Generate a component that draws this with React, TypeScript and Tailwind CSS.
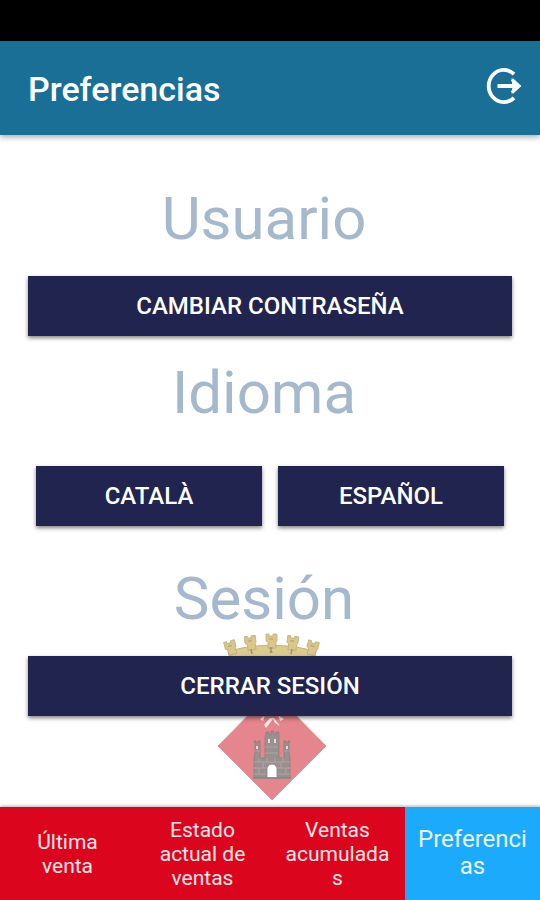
import type { ReactNode } from "react";

function LogoutIcon() {
  return (
    <svg viewBox="0 0 38 38" className="size-[38px]" fill="none" stroke="#fff" strokeWidth="3.8" aria-hidden="true">
      <path d="M30 7.200A15 16.200 0 1 0 30 30.800" />
      <path d="M13.500 19H33" strokeWidth="4" />
      <path d="M27.500 11L37 19L27.500 27L28.500 19Z" fill="#fff" stroke="none" />
      <path d="M28 12.500L35 19L28 25.500" strokeWidth="3.2" />
    </svg>
  );
}

const crenels = [
  { x: 7, y: 8, r: -15 },
  { x: 27, y: 3, r: -8 },
  { x: 48, y: 1, r: 0 },
  { x: 69, y: 3, r: 8 },
  { x: 89, y: 8, r: 15 },
];

function Crest() {
  return (
    <svg viewBox="0 0 110 168" className="w-[110px]" aria-hidden="true">
      <path d="M11 18Q54 6 99 18L91 50H19Z" fill="#dccb8b" stroke="#c4b582" strokeWidth="1" />
      {crenels.map((c) => (
        <g key={c.x} transform={`rotate(${c.r} ${c.x + 6} ${c.y + 6})`}>
          <path
            d={`M${c.x + 1} ${c.y}h3v2h4v-2h4v7l-1 1v6h-8v-6l-2-1z`}
            fill="#d8c788"
            stroke="#bcae80"
            strokeWidth="0.8"
          />
          <path d={`M${c.x + 4} ${c.y + 5}h4`} stroke="#a99d74" strokeWidth="1" />
        </g>
      ))}
      <g stroke="#a3966a" strokeWidth="1.6" fill="none">
        <path d="M34 16l1 5M54 14v6M52.500 15h3M52.500 19h3M75 16l-1 5" />
      </g>
      <path d="M55 58L109 113L55 167L1 113Z" fill="#e5858d" stroke="#dd9a9e" strokeWidth="1" />
      <path d="M47 92L53 85H57L63 93L58 90L56 86L49 95ZM43 86L48 82L46 88ZM61 82L67 86L63 88Z" fill="#fbe9e9" />
      <path
        d="M37 145V125L38 119V112L37 108H39V110H41V108H43V111L43 125H48V105L49 99H52V102H54V98H57V102H59V99H62V105V125H67V111L67 108H69V110H71V108H73L72 112V119L73 125V145Z"
        fill="#989190"
        stroke="#867f7f"
        strokeWidth="0.7"
      />
      <g stroke="#b9aead" strokeWidth="0.7" fill="none">
        <path d="M38 118H43M67 118H72M48 114H61M48 120H61M37 129H73M37 135H73M37 141H73" />
        <path d="M42 125V129M50 125V129M58 125V129M66 125V129M46 129V135M64 129V135M42 135V141M69 135V141" />
      </g>
      <path d="M51 106h2v4h-2zM57 106h2v4h-2zM39 113h2v3h-2zM69 113h2v3h-2z" fill="#efd2d2" />
      <path d="M50 145V135Q51 131 55 131Q59 131 60 135V145Z" fill="#fff" stroke="#8a7f7f" strokeWidth="0.8" />
      <path d="M36 145H74" stroke="#8d8585" strokeWidth="1.5" />
    </svg>
  );
}

function ActionButton({ children }: { children: ReactNode }) {
  return (
    <button
      type="button"
      className="h-[60px] min-w-0 flex-1 bg-[#20244f] text-[24px] leading-[28px] font-medium text-white uppercase shadow-[0_2px_4px_rgba(0,0,0,0.5)]"
    >
      {children}
    </button>
  );
}

function SectionTitle({ children }: { children: ReactNode }) {
  return <h2 className="pr-3 text-center text-[60px] leading-[70px] text-[#a6b8cb]">{children}</h2>;
}

const tabs = ["Última venta", "Estado actual de ventas", "Ventas acumuladas"];

export default function App() {
  return (
    <div className="flex min-h-screen flex-col bg-white font-['Roboto',sans-serif]">
      <div className="h-[41px] bg-black" />
      <header className="z-10 flex h-[94px] items-center justify-between bg-[#196f96] pr-[18px] pl-7 shadow-[0_2px_6px_rgba(0,0,0,0.35)]">
        <h1 className="pt-0.5 text-[34px] leading-[40px] font-medium text-white">Preferencias</h1>
        <button type="button" aria-label="Salir" className="pb-1">
          <LogoutIcon />
        </button>
      </header>

      <main className="relative isolate flex flex-1 flex-col gap-[22px] px-7 pt-[49px]">
        <div className="absolute inset-x-0 bottom-[6px] -z-10 flex justify-center pl-1">
          <Crest />
        </div>
        <SectionTitle>Usuario</SectionTitle>
        <div className="flex">
          <ActionButton>Cambiar contraseña</ActionButton>
        </div>
        <SectionTitle>Idioma</SectionTitle>
        <div className="flex gap-4 px-2 py-4">
          <ActionButton>Català</ActionButton>
          <ActionButton>Español</ActionButton>
        </div>
        <SectionTitle>Sesión</SectionTitle>
        <div className="flex">
          <ActionButton>Cerrar sesión</ActionButton>
        </div>
      </main>

      <nav className="grid h-[93px] grid-cols-4 shadow-[0_-1px_3px_rgba(0,0,0,0.3)]">
        {tabs.map((tab) => (
          <button
            key={tab}
            type="button"
            className="bg-[#db061e] px-[14px] text-[21px] leading-[24px] wrap-anywhere text-[#ffe6e8]"
          >
            {tab}
          </button>
        ))}
        <button
          type="button"
          aria-current="page"
          className="bg-[#1caafc] px-3 pb-0.5 text-[24px] leading-[27px] wrap-anywhere text-[#e8f6ff]"
        >
          Preferencias
        </button>
      </nav>
    </div>
  );
}
